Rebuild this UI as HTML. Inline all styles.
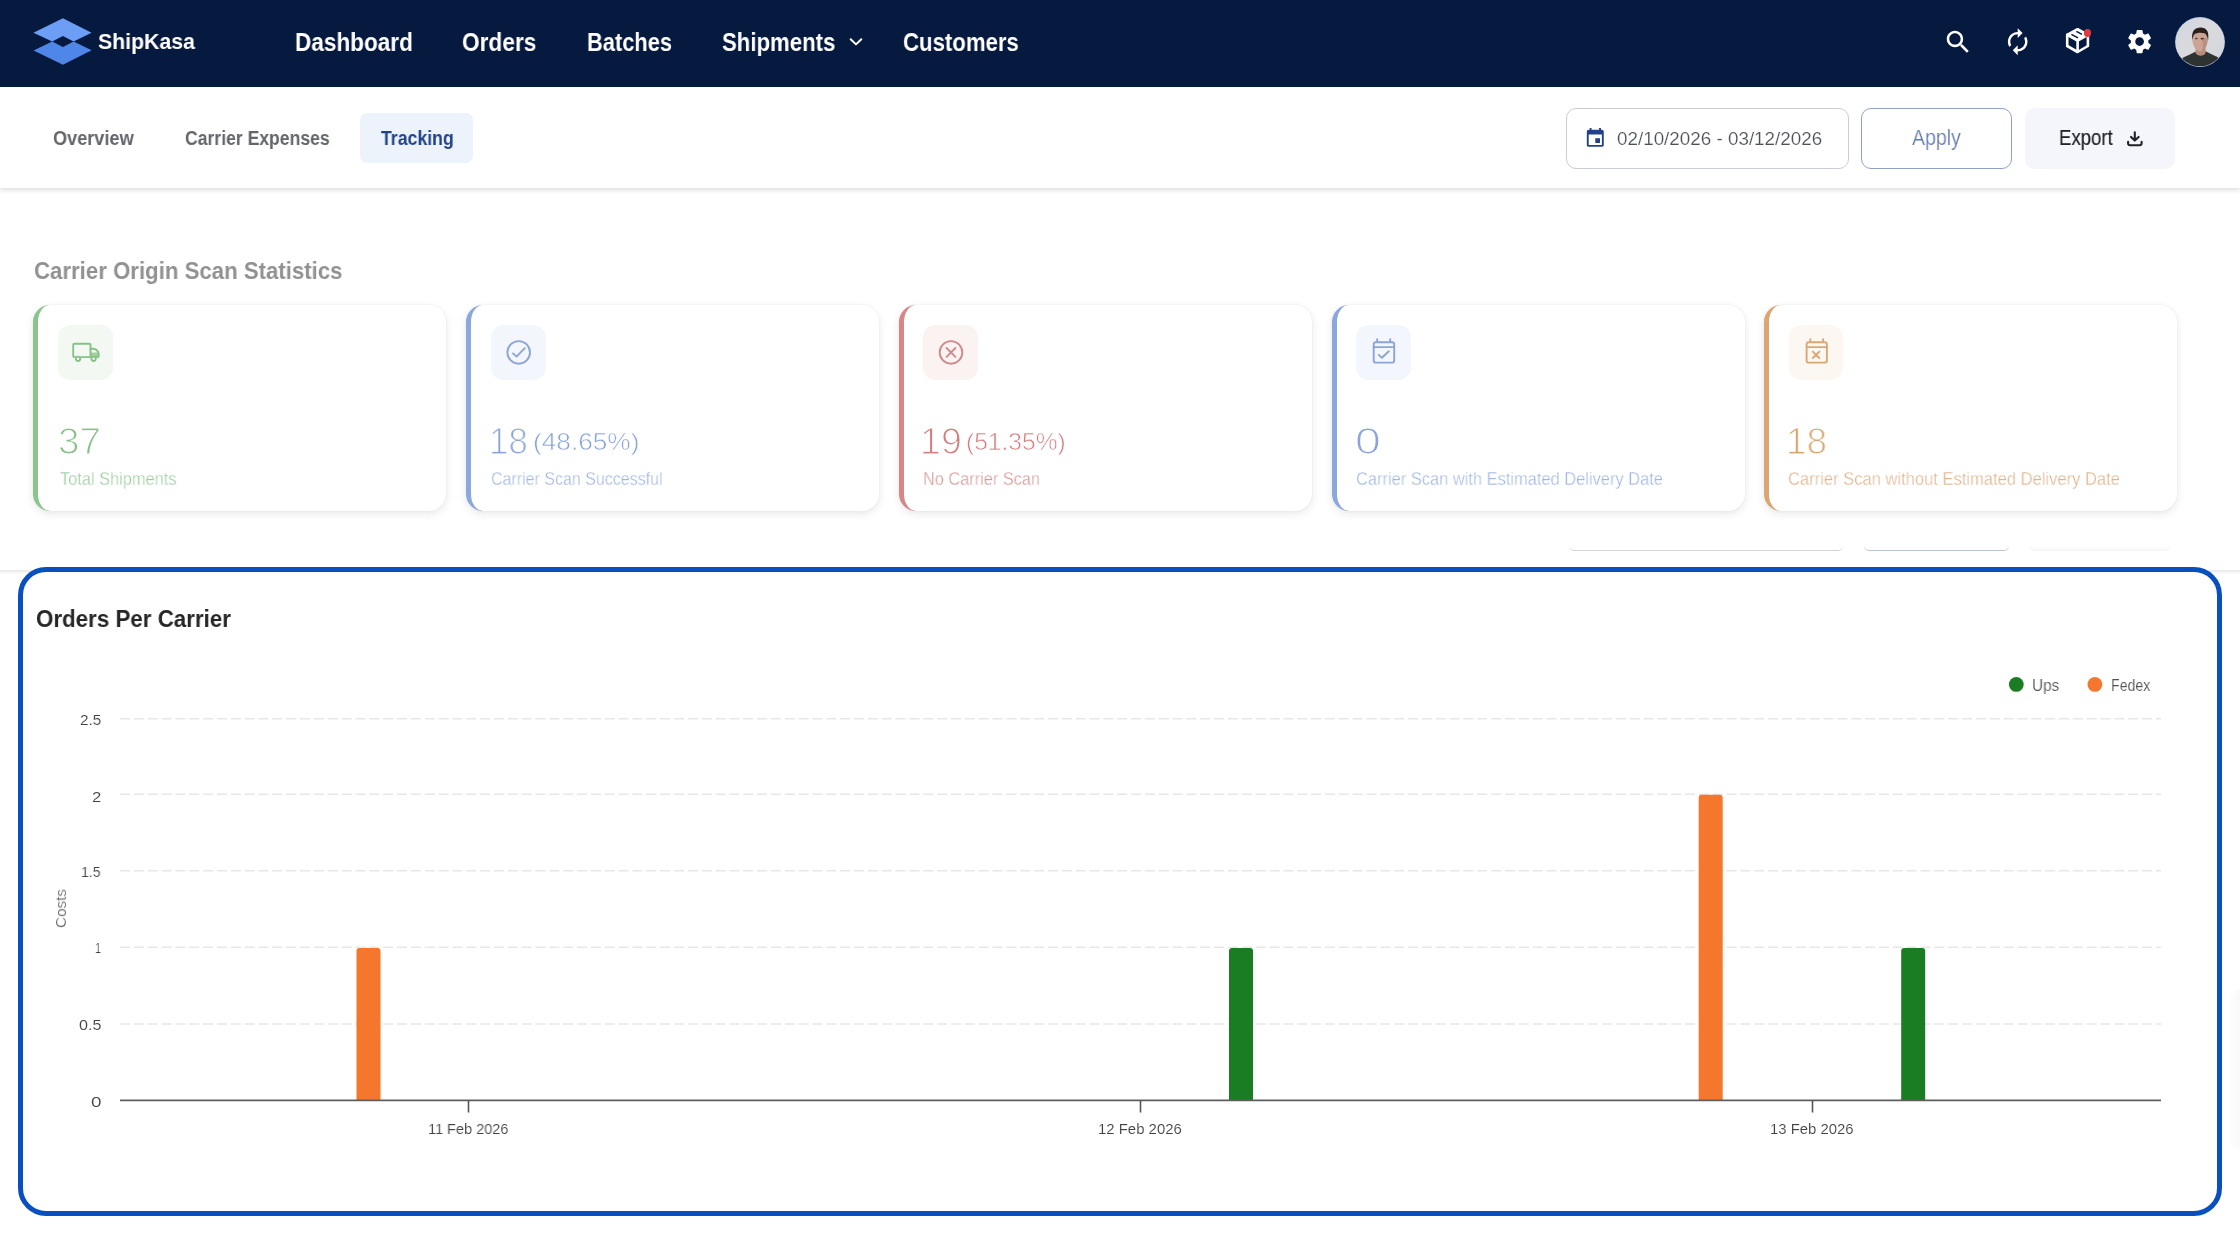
<!DOCTYPE html>
<html lang="en">
<head>
<meta charset="utf-8">
<title>ShipKasa - Tracking</title>
<style>
*{box-sizing:border-box;margin:0;padding:0}
html,body{width:2240px;height:1260px;overflow:hidden;background:#fff;font-family:"Liberation Sans",sans-serif;}
.abs{position:absolute}
.t{position:absolute;white-space:nowrap;line-height:1;transform-origin:0 0;display:block;will-change:transform}
svg{position:absolute;overflow:visible}
#nav{position:absolute;left:0;top:0;width:2240px;height:87px;background:#06193f}
#sub{position:absolute;left:0;top:87px;width:2240px;height:101px;background:#fff;box-shadow:0 2px 5px rgba(0,0,0,.14)}
#chip{position:absolute;left:360px;top:113px;width:113px;height:50px;background:#edf3fa;border-radius:7px}
.btn{position:absolute;top:108px;height:61px;border-radius:10px}
#date{left:1566px;width:283px;border:1.5px solid #c9cdd4;background:#fff}
#apply{left:1861px;width:151px;border:1.5px solid #8fa1c6;background:#fff}
#export{left:2025px;width:150px;background:#f4f6fb}
.card{position:absolute;top:304.5px;width:413.3px;height:206.5px;background:#fff;border-radius:17px;border-left:5.5px solid #000;box-shadow:0 3px 10px rgba(0,0,0,.09),0 0 3px rgba(0,0,0,.05)}
.ib{position:absolute;top:325px;width:54.6px;height:55px;border-radius:12.5px}
#hl{position:absolute;left:18px;top:567px;width:2204px;height:648.6px;border:5.8px solid #0a4fc0;border-radius:28px;background:#fff}
</style>
</head>
<body>
<div class="abs" style="left:0;top:569.8px;width:2240px;height:4.6px;background:linear-gradient(#e7e7e7,#f1f1f1 45%,#fafafa 80%,#fff)"></div>
<!-- clipped button ghosts -->
<div class="abs" style="left:1569px;top:546px;width:274px;height:5px;border-bottom:1.6px solid #d3d4d6;border-radius:0 0 9px 9px"></div>
<div class="abs" style="left:1864px;top:546px;width:145px;height:5px;border-bottom:1.6px solid #bcc5d3;border-radius:0 0 9px 9px"></div>
<div class="abs" style="left:2029px;top:546px;width:142px;height:4.6px;background:linear-gradient(#fff,#f4f5f8);border-radius:0 0 9px 9px"></div>

<div id="nav"></div>
<div id="sub"></div>
<div id="chip"></div>
<div class="btn" id="date"></div>
<div class="btn" id="apply"></div>
<div class="btn" id="export"></div>

<!-- logo -->
<svg style="left:33px;top:18px" width="59" height="47" viewBox="33 18 59 47">
  <path d="M62.9 18.2 L91.6 32.7 L73.6 41.6 L62.9 36.1 L52.2 41.6 L33.4 32.7 Z" fill="#6c9ef5"/>
  <path d="M62.9 64.7 L91.6 50.3 L73.6 41.6 L62.9 46.9 L52.2 41.6 L33.6 50.4 Z" fill="#4f87e8"/>
</svg>
<!-- chevron -->
<svg style="left:849px;top:37px" width="14" height="10" viewBox="0 0 14 10"><path d="M1.7 2.2 L7 7.4 L12.3 2.2" fill="none" stroke="#fff" stroke-width="2" stroke-linecap="round" stroke-linejoin="round"/></svg>
<!-- nav icons -->
<svg style="left:1942.5px;top:27.4px" width="30.2" height="30.2" viewBox="0 0 24 24" fill="#fff"><path d="M15.5 14h-.79l-.28-.27C15.41 12.59 16 11.11 16 9.5 16 5.91 13.09 3 9.5 3S3 5.91 3 9.5 5.91 16 9.5 16c1.61 0 3.09-.59 4.23-1.57l.27.28v.79l5 4.99L20.49 19l-4.99-5zm-6 0C7.01 14 5 11.99 5 9.5S7.01 5 9.5 5 14 7.01 14 9.5 11.99 14 9.5 14z"/></svg>
<svg style="left:2003.2px;top:27.3px" width="29.4" height="29.4" viewBox="0 0 24 24" fill="#fff"><path d="M12 6v3l4-4-4-4v3c-4.42 0-8 3.58-8 8 0 1.57.46 3.03 1.24 4.26L6.7 14.8c-.45-.83-.7-1.79-.7-2.8 0-3.31 2.69-6 6-6zm6.76 1.74L17.3 9.2c.44.84.7 1.79.7 2.8 0 3.31-2.69 6-6 6v-3l-4 4 4 4v-3c4.42 0 8-3.58 8-8 0-1.57-.46-3.03-1.24-4.26z"/></svg>
<svg style="left:2060px;top:22px" width="36" height="36" viewBox="2060 22 36 36">
  <path d="M2077.6 29.2 L2087.9 34.9 L2077.6 40.6 L2067.2 34.9 Z" fill="#fff" stroke="#fff" stroke-width="2.6" stroke-linejoin="round"/>
  <path d="M2067.2 34.9 V46 L2077.6 52 L2087.9 46 V34.9 M2077.6 40.6 V52" fill="none" stroke="#fff" stroke-width="2.6" stroke-linejoin="round" stroke-linecap="round"/>
  <path d="M2071.4 34.3 L2078 37.9 M2076.4 31.4 L2082 34.4" stroke="#06193f" stroke-width="1.5"/>
</svg>
<div class="abs" style="left:2083.5px;top:29.1px;width:7.7px;height:7.7px;border-radius:50%;background:#e03a40"></div>
<svg style="left:2124.5px;top:27.2px" width="29.2" height="29.2" viewBox="0 0 24 24" fill="#fff"><path d="M19.14 12.94c.04-.3.06-.61.06-.94 0-.32-.02-.64-.07-.94l2.03-1.58c.18-.14.23-.41.12-.61l-1.92-3.32c-.12-.22-.37-.29-.59-.22l-2.39.96c-.5-.38-1.03-.7-1.62-.94l-.36-2.54c-.04-.24-.24-.41-.48-.41h-3.84c-.24 0-.43.17-.47.41l-.36 2.54c-.59.24-1.13.57-1.62.94l-2.39-.96c-.22-.08-.47 0-.59.22L2.74 8.87c-.12.21-.08.47.12.61l2.03 1.58c-.05.3-.09.63-.09.94s.02.64.07.94l-2.03 1.58c-.18.14-.23.41-.12.61l1.92 3.32c.12.22.37.29.59.22l2.39-.96c.5.38 1.03.7 1.62.94l.36 2.54c.05.24.24.41.48.41h3.84c.24 0 .44-.17.47-.41l.36-2.54c.59-.24 1.13-.56 1.62-.94l2.39.96c.22.08.47 0 .59-.22l1.92-3.32c.12-.22.07-.47-.12-.61l-2.01-1.58zM12 15.6c-1.98 0-3.6-1.62-3.6-3.6s1.62-3.6 3.6-3.6 3.6 1.62 3.6 3.6-1.62 3.6-3.6 3.6z"/></svg>
<!-- avatar -->
<svg style="left:2175px;top:16.6px" width="50" height="50" viewBox="0 0 50 50">
  <defs><clipPath id="av"><circle cx="25" cy="25" r="24.3"/></clipPath>
  <linearGradient id="avbg" x1="0" y1="0" x2="1" y2="1"><stop offset="0" stop-color="#d2d6e0"/><stop offset=".5" stop-color="#dadadd"/><stop offset="1" stop-color="#d3d5dd"/></linearGradient></defs>
  <circle cx="25" cy="25" r="24.9" fill="#b9c6df"/>
  <circle cx="25" cy="25" r="24.3" fill="url(#avbg)"/>
  <g clip-path="url(#av)" style="filter:blur(.35px)">
    <path d="M5 50 L7.5 41 C12 38.5 17 36.5 21 34.4 L31 34.4 C35 36.5 39 38.2 43 40.2 L45.5 50 Z" fill="#2d3331"/>
    <path d="M20.6 29 H30.6 V36 C29 39.5 22.5 39.8 20.6 36 Z" fill="#b78e7c"/>
    <path d="M17.3 22 C17 16 20 13.2 25 13.2 C30 13.2 33 16 32.8 22 C32.7 27 30.5 34.2 25.6 34.4 C20.5 34.4 17.5 28 17.3 22 Z" fill="#caa494"/>
    <path d="M26.5 22 C29 20.5 31.5 21 32.6 22.5 C32.4 27.5 30.6 33 26.5 34.2 C28.5 31 28.6 26 26.5 22 Z" fill="#a8806f" opacity=".55"/>
    <path d="M17.2 23 C16.2 14 20 10.6 25.5 10.6 C31.5 10.6 34.4 14.5 33.1 23.2 C32.3 19.5 31.5 17 29.5 16.2 C26 15.2 22.5 15.6 20 16.8 C18.4 18 17.8 20 17.2 23 Z" fill="#2c201b"/>
    <ellipse cx="21.3" cy="21.6" rx="1.5" ry=".8" fill="#5b4238"/><ellipse cx="27.2" cy="21.6" rx="1.7" ry=".9" fill="#4a352d"/>
  </g>
</svg>

<!-- date icon -->
<svg style="left:1584.1px;top:127.2px" width="22.6" height="22.6" viewBox="0 0 24 24" fill="#23418a"><path d="M17 12h-5v5h5v-5zM16 1v2H8V1H6v2H5c-1.11 0-1.99.9-1.99 2L3 19c0 1.1.89 2 2 2h14c1.1 0 2-.9 2-2V5c0-1.1-.9-2-2-2h-1V1h-2zm3 18H5V8h14v11z"/></svg>
<!-- download icon -->
<svg style="left:2120px;top:125px" width="30" height="30" viewBox="2120 125 30 30" fill="none" stroke="#222326" stroke-width="2.1" stroke-linecap="round" stroke-linejoin="round"><path d="M2128.1 141.8 V143.3 Q2128.1 145.3 2130.1 145.3 H2139.6 Q2141.6 145.3 2141.6 143.3 V141.8"/><path d="M2134.8 132.2 V140.2 M2131 136.9 L2134.8 140.6 L2138.6 136.9"/></svg>

<!-- cards -->
<div class="card" style="left:33px;border-left-color:#8bc48c"></div>
<div class="card" style="left:466px;border-left-color:#8ba8dd"></div>
<div class="card" style="left:899px;border-left-color:#d78686"></div>
<div class="card" style="left:1332px;border-left-color:#8ba8dd"></div>
<div class="card" style="left:1764px;border-left-color:#dba671"></div>
<div class="ib" style="left:58.3px;background:#f3f8f3"></div>
<div class="ib" style="left:491.3px;background:#f3f6fd"></div>
<div class="ib" style="left:923.3px;background:#fbf2f2"></div>
<div class="ib" style="left:1356.3px;background:#f3f6fd"></div>
<div class="ib" style="left:1788.9px;background:#fdf7f2"></div>

<!-- card icons -->
<svg style="left:0;top:300px" width="2240" height="100" viewBox="0 300 2240 100" fill="none" stroke-width="1.9" stroke-linecap="round" stroke-linejoin="round">
  <!-- truck -->
  <g stroke="#86c288">
    <path d="M90.5 352.6 H98.6 V356.1 Q98.6 357.1 97.6 357.1 H90.5 Z" fill="#86c288" fill-opacity=".75" stroke="none"/>
    <path d="M75.2 357.1 H74.2 Q73.2 357.1 73.2 356.1 V344.7 Q73.2 343.7 74.2 343.7 H89.5 Q90.5 343.7 90.5 344.7 V357.1 H80.9"/>
    <path d="M90.5 348.7 H93.4 Q98.4 349.6 98.7 354.4 V356.1 Q98.7 357.1 97.7 357.1 H96.5"/>
    <circle cx="78.05" cy="358.8" r="2.15" fill="#f3f8f3"/><circle cx="93.6" cy="358.8" r="2.15" fill="#f3f8f3"/>
  </g>
  <!-- check circle -->
  <g stroke="#8ea4d4"><circle cx="518.7" cy="352.4" r="11.3"/><path d="M513 353.4 L516.5 356.6 L524.8 348.2"/></g>
  <!-- x circle -->
  <g stroke="#cf8b8b"><circle cx="951" cy="352.4" r="11.3"/><path d="M946.6 348 L955.4 356.8 M955.4 348 L946.6 356.8"/></g>
  <!-- calendar check -->
  <g stroke="#8ea4d4"><rect x="1373.7" y="342.3" width="20.5" height="20.3" rx="2.2"/><path d="M1373.7 347.1 H1394.2 M1377.2 339.3 V341.6 M1390.2 339.3 V341.6"/><path d="M1378.8 354.9 L1381.9 357.7 L1388.8 351.3"/></g>
  <!-- calendar x -->
  <g stroke="#d9a877"><rect x="1806.6" y="342.3" width="20.3" height="20.3" rx="2.2"/><path d="M1806.6 347.1 H1826.9 M1810.3 339.3 V341.6 M1823.1 339.3 V341.6"/><path d="M1812.8 351.6 L1819.4 358 M1819.4 351.6 L1812.8 358"/></g>
</svg>

<div id="hl"></div>
<!-- right-edge faint shadow -->
<div class="abs" style="left:2228px;top:990px;width:14px;height:160px;background:linear-gradient(90deg,rgba(0,0,0,0),rgba(0,0,0,.03));border-radius:14px 0 0 14px;filter:blur(2px)"></div>

<!-- chart -->
<svg style="left:0;top:0" width="2240" height="1260" viewBox="0 0 2240 1260">
  <g stroke="#e7e7e7" stroke-width="1.6" stroke-dasharray="10 3.85">
    <path d="M120 718.8H2161M120 794.2H2161M120 870.8H2161M120 947.3H2161M120 1024H2161"/>
  </g>
  <g>
    <path d="M356.5 1100.5V951a3 3 0 0 1 3-3h18a3 3 0 0 1 3 3v149.5z" fill="#f4772d"/>
    <path d="M1229 1100.5V951a3 3 0 0 1 3-3h18a3 3 0 0 1 3 3v149.5z" fill="#1b7d23"/>
    <path d="M1698.7 1100.5V797.8a3 3 0 0 1 3-3h18a3 3 0 0 1 3 3v302.7z" fill="#f4772d"/>
    <path d="M1901.2 1100.5V951a3 3 0 0 1 3-3h18a3 3 0 0 1 3 3v149.5z" fill="#1b7d23"/>
  </g>
  <path d="M120 1100.3H2161" stroke="#5e5e5e" stroke-width="1.8"/>
  <path d="M468.5 1100.5V1112.4M1140.5 1100.5V1112.4M1812.5 1100.5V1112.4" stroke="#555" stroke-width="1.6"/>
  <circle cx="2016.3" cy="684.4" r="7.4" fill="#1b7d23"/>
  <circle cx="2094.9" cy="684.4" r="7.4" fill="#f4772d"/>
</svg>
<span class="t" style="left:53.3px;top:927.9px;font-size:15.5px;color:#6c6c6c;-webkit-text-stroke:0.12px #fff;transform-origin:0 0;transform:rotate(-90deg) scaleX(.985)">Costs</span>

<span class="t" style="left:97.69px;top:31.0px;font-size:22.5px;font-weight:bold;color:#fff;transform:scaleX(0.9451);">ShipKasa</span>
<span class="t" style="left:294.68px;top:29.0px;font-size:26px;font-weight:bold;color:#fff;transform:scaleX(0.8679);">Dashboard</span>
<span class="t" style="left:462.33px;top:29.0px;font-size:26px;font-weight:bold;color:#fff;transform:scaleX(0.8721);">Orders</span>
<span class="t" style="left:586.53px;top:29.0px;font-size:26px;font-weight:bold;color:#fff;transform:scaleX(0.8407);">Batches</span>
<span class="t" style="left:721.86px;top:29.0px;font-size:26px;font-weight:bold;color:#fff;transform:scaleX(0.8527);">Shipments</span>
<span class="t" style="left:903.25px;top:29.0px;font-size:26px;font-weight:bold;color:#fff;transform:scaleX(0.8531);">Customers</span>
<span class="t" style="left:53.32px;top:128.1px;font-size:20px;font-weight:bold;color:#63666a;transform:scaleX(0.9065);">Overview</span>
<span class="t" style="left:185.14px;top:128.1px;font-size:20px;font-weight:bold;color:#63666a;transform:scaleX(0.8791);">Carrier Expenses</span>
<span class="t" style="left:380.68px;top:128.1px;font-size:20px;font-weight:bold;color:#24448a;transform:scaleX(0.8842);">Tracking</span>
<span class="t" style="left:1616.82px;top:130.4px;font-size:18.2px;font-weight:normal;color:#4d5056;transform:scaleX(1.0351);-webkit-text-stroke:0.18px #fff;">02/10/2026 - 03/12/2026</span>
<span class="t" style="left:1911.77px;top:127.2px;font-size:21.6px;font-weight:normal;color:#6279ad;transform:scaleX(0.9028);-webkit-text-stroke:0.2px #fff;">Apply</span>
<span class="t" style="left:2058.50px;top:127.4px;font-size:21.6px;font-weight:normal;color:#222326;transform:scaleX(0.8593);-webkit-text-stroke:0.2px #222326;">Export</span>
<span class="t" style="left:33.57px;top:258.7px;font-size:24px;font-weight:bold;color:#919191;transform:scaleX(0.9252);">Carrier Origin Scan Statistics</span>
<span class="t" style="left:57.69px;top:423.3px;font-size:37.6px;font-weight:normal;color:#86c088;transform:scaleX(1.0270);-webkit-text-stroke:1.15px #fff;">37</span>
<span class="t" style="left:59.55px;top:470.2px;font-size:18px;font-weight:normal;color:#9acc9b;transform:scaleX(0.9097);-webkit-text-stroke:0.3px #fff;">Total Shipments</span>
<span class="t" style="left:489.15px;top:423.3px;font-size:37.6px;font-weight:normal;color:#8aa4da;transform:scaleX(0.9278);-webkit-text-stroke:1.15px #fff;">18</span>
<span class="t" style="left:533.09px;top:429.9px;font-size:24px;font-weight:normal;color:#8aa4da;transform:scaleX(1.0923);-webkit-text-stroke:0.55px #fff;">(48.65%)</span>
<span class="t" style="left:490.91px;top:470.2px;font-size:18px;font-weight:normal;color:#9fb5e2;transform:scaleX(0.8886);-webkit-text-stroke:0.3px #fff;">Carrier Scan Successful</span>
<span class="t" style="left:919.93px;top:423.3px;font-size:37.6px;font-weight:normal;color:#d38080;transform:scaleX(0.9917);-webkit-text-stroke:1.15px #fff;">19</span>
<span class="t" style="left:965.81px;top:429.9px;font-size:24px;font-weight:normal;color:#d38080;transform:scaleX(1.0240);-webkit-text-stroke:0.55px #fff;">(51.35%)</span>
<span class="t" style="left:922.84px;top:470.2px;font-size:18px;font-weight:normal;color:#d99494;transform:scaleX(0.9069);-webkit-text-stroke:0.3px #fff;">No Carrier Scan</span>
<span class="t" style="left:1355.13px;top:423.3px;font-size:37.6px;font-weight:normal;color:#8aa4da;transform:scaleX(1.2353);-webkit-text-stroke:1.15px #fff;">0</span>
<span class="t" style="left:1356.39px;top:470.2px;font-size:18px;font-weight:normal;color:#9fb5e2;transform:scaleX(0.9134);-webkit-text-stroke:0.3px #fff;">Carrier Scan with Estimated Delivery Date</span>
<span class="t" style="left:1785.97px;top:423.3px;font-size:37.6px;font-weight:normal;color:#d9a36c;transform:scaleX(0.9806);-webkit-text-stroke:1.15px #fff;">18</span>
<span class="t" style="left:1788.48px;top:470.2px;font-size:18px;font-weight:normal;color:#e0b288;transform:scaleX(0.9194);-webkit-text-stroke:0.3px #fff;">Carrier Scan without Estimated Delivery Date</span>
<span class="t" style="left:36.25px;top:607.6px;font-size:23.4px;font-weight:bold;color:#262626;transform:scaleX(0.9549);">Orders Per Carrier</span>
<span class="t" style="left:2032.49px;top:677.5px;font-size:15.8px;font-weight:normal;color:#505050;transform:scaleX(0.9676);-webkit-text-stroke:0.12px #fff;">Ups</span>
<span class="t" style="left:2111.18px;top:677.5px;font-size:15.8px;font-weight:normal;color:#505050;transform:scaleX(0.8947);-webkit-text-stroke:0.12px #fff;">Fedex</span>
<span class="t" style="left:79.85px;top:711.8px;font-size:15.4px;font-weight:normal;color:#424242;transform:scaleX(0.9950);-webkit-text-stroke:0.12px #fff;">2.5</span>
<span class="t" style="left:92.09px;top:789.0px;font-size:15.4px;font-weight:normal;color:#424242;transform:scaleX(1.0857);-webkit-text-stroke:0.12px #fff;">2</span>
<span class="t" style="left:81.45px;top:863.8px;font-size:15.4px;font-weight:normal;color:#424242;transform:scaleX(0.9179);-webkit-text-stroke:0.12px #fff;">1.5</span>
<span class="t" style="left:95.13px;top:939.9px;font-size:15.4px;font-weight:normal;color:#424242;transform:scaleX(0.6923);-webkit-text-stroke:0.12px #fff;">1</span>
<span class="t" style="left:78.71px;top:1016.7px;font-size:15.4px;font-weight:normal;color:#424242;transform:scaleX(1.0500);-webkit-text-stroke:0.12px #fff;">0.5</span>
<span class="t" style="left:90.68px;top:1093.7px;font-size:15.4px;font-weight:normal;color:#424242;transform:scaleX(1.2276);-webkit-text-stroke:0.12px #fff;">0</span>
<span class="t" style="left:428.48px;top:1121.7px;font-size:14.9px;font-weight:normal;color:#424242;transform:scaleX(0.9739);-webkit-text-stroke:0.12px #fff;">11 Feb 2026</span>
<span class="t" style="left:1098.35px;top:1121.7px;font-size:14.9px;font-weight:normal;color:#424242;transform:scaleX(1.0025);-webkit-text-stroke:0.12px #fff;">12 Feb 2026</span>
<span class="t" style="left:1769.55px;top:1121.7px;font-size:14.9px;font-weight:normal;color:#424242;transform:scaleX(0.9963);-webkit-text-stroke:0.12px #fff;">13 Feb 2026</span>
</body>
</html>
